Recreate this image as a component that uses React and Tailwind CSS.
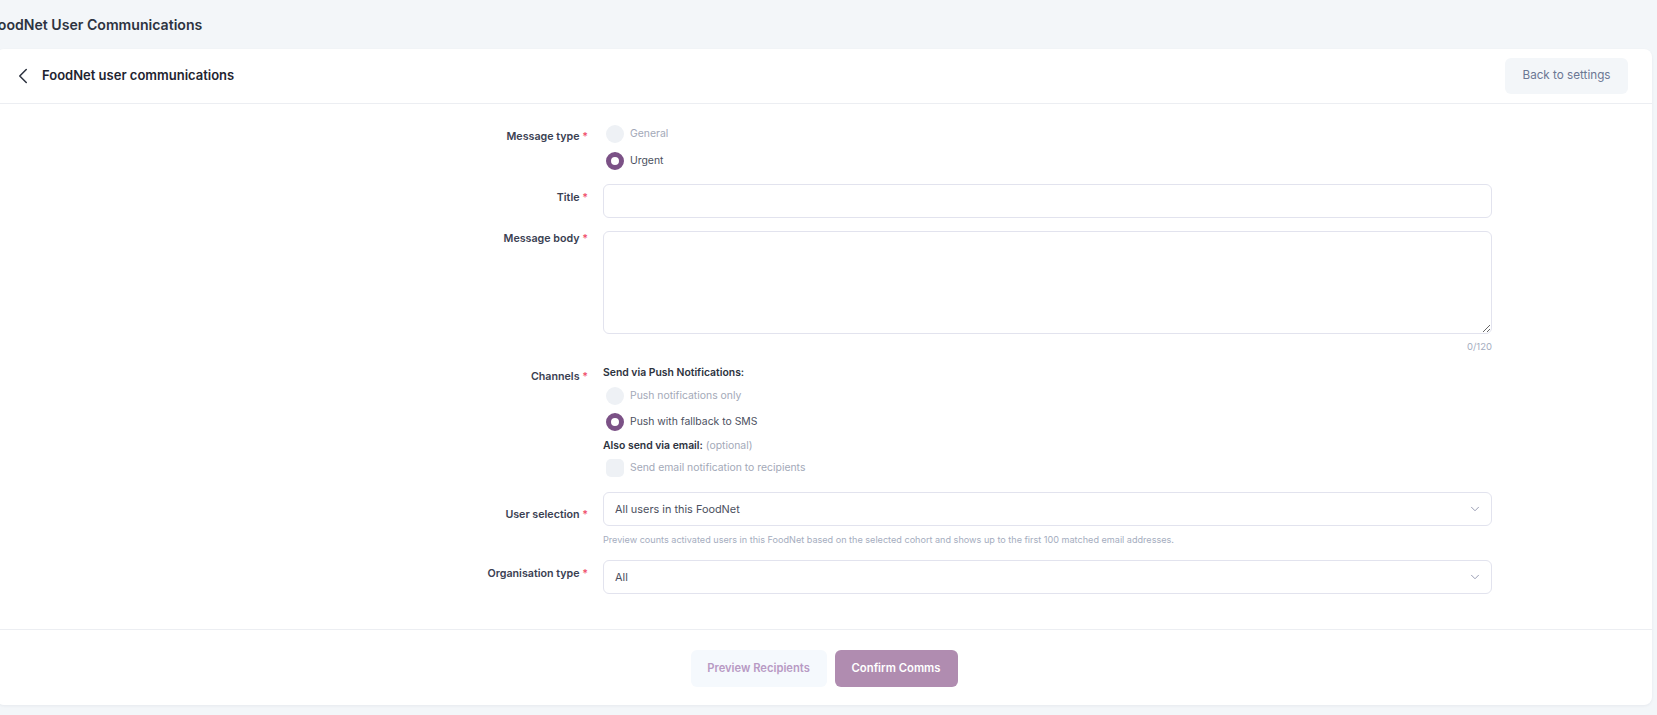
import React from "react";
import { ChevronLeft, ChevronDown } from "lucide-react";

const Label = ({ children, pt = "pt-0" }) => (
  <div className={`w-[200px] shrink-0 text-right text-[10.7px] leading-4 font-semibold text-[#3a4052] ${pt}`}>
    {children} <span className="text-[#f0506e]">*</span>
  </div>
);

const Radio = ({ checked, label }) => (
  <div className="flex items-center gap-[6px] h-[18px] pl-[3px]">
    {checked ? (
      <span className="w-[18px] h-[18px] rounded-full border-[5px] border-[#7b5186] bg-white" />
    ) : (
      <span className="w-[18px] h-[18px] rounded-full bg-[#eef1f5]" />
    )}
    <span className={`text-[10.4px] ${checked ? "text-[#4b5060]" : "text-[#a3a9b8]"}`}>{label}</span>
  </div>
);

const Select = ({ value }) => (
  <div className="h-[34px] w-[889px] rounded-md border border-[#e2e3ee] bg-white flex items-center justify-between pl-[11px] pr-[9px]">
    <span className="text-[10.9px] text-[#4b5060]">{value}</span>
    <ChevronDown size={14} strokeWidth={1.5} className="text-[#8a8fa8]" />
  </div>
);

export default function App() {
  return (
    <div className="w-[1657px] h-[715px] overflow-hidden bg-[#f3f6f9] font-['Inter',sans-serif]">
      <div className="h-[49px] flex items-center">
        <h1 className="-ml-[10px] mt-[1px] text-[14.1px] font-semibold text-[#2d3340]">FoodNet User Communications</h1>
      </div>

      <div className="-ml-1 w-[1656px] h-[656px] bg-white rounded-lg shadow-[0_1px_3px_rgba(30,40,60,0.06)]">
        <div className="h-[55px] flex items-center justify-between px-6 border-b border-[#eceef2]">
          <div className="flex items-center gap-[6px]">
            <ChevronLeft size={26} strokeWidth={1.4} className="text-[#2d3340] -ml-[10px]" />
            <span className="text-[13px] font-semibold text-[#1f2430]">FoodNet user communications</span>
          </div>
          <button className="h-[36px] w-[123px] rounded-md bg-[#f3f6f9] text-[11.7px] text-[#6b7794]">
            Back to settings
          </button>
        </div>

        <div className="pl-[392px] pt-[21px] pb-[35px] border-b border-[#eceef2] flex flex-col">
          <div className="flex gap-[15px]">
            <Label pt="pt-[4px]">Message type</Label>
            <div className="flex flex-col gap-[9px]">
              <Radio label="General" />
              <Radio checked label="Urgent" />
            </div>
          </div>

          <div className="flex gap-[15px] mt-[14px]">
            <Label pt="pt-[6px]">Title</Label>
            <div className="h-[34px] w-[889px] rounded-md border border-[#e2e3ee]" />
          </div>

          <div className="flex gap-[15px] mt-[13px]">
            <Label pt="pt-0">Message body</Label>
            <div className="w-[889px] flex flex-col">
              <textarea className="h-[103px] w-full rounded-md border border-[#e2e3ee] outline-none" />
              <div className="mt-[6px] text-right text-[9.5px] leading-[14px] text-[#a5adc0]">0/120</div>
            </div>
          </div>

          <div className="flex gap-[15px] mt-[11px]">
            <Label pt="pt-[4px]">Channels</Label>
            <div className="flex flex-col">
              <div className="text-[10.4px] leading-4 font-semibold text-[#2d3340]">Send via Push Notifications:</div>
              <div className="mt-[6px] flex flex-col gap-[8px]">
                <Radio label="Push notifications only" />
                <Radio checked label="Push with fallback to SMS" />
              </div>
              <div className="mt-[7px] text-[10.4px] leading-4 text-[#2d3340]">
                <span className="font-semibold">Also send via email:</span>{" "}
                <span className="text-[#a3a9b8]">(optional)</span>
              </div>
              <div className="mt-[5px] flex items-center gap-[6px] h-[18px] pl-[3px]">
                <span className="w-[18px] h-[18px] rounded-[5px] bg-[#eef1f5]" />
                <span className="text-[10.4px] text-[#a3a9b8]">Send email notification to recipients</span>
              </div>
            </div>
          </div>

          <div className="flex gap-[15px] mt-[15px]">
            <Label pt="pt-[15px]">User selection</Label>
            <div className="flex flex-col">
              <Select value="All users in this FoodNet" />
              <div className="mt-[7px] text-[9.1px] leading-[14px] text-[#a5adc0]">
                Preview counts activated users in this FoodNet based on the selected cohort and shows up to the first 100 matched email addresses.
              </div>
            </div>
          </div>

          <div className="flex gap-[15px] mt-[13px]">
            <Label pt="pt-[6px]">Organisation type</Label>
            <Select value="All" />
          </div>
        </div>

        <div className="flex justify-center gap-2 pt-[20px]">
          <button className="h-[37px] w-[136px] rounded-md bg-[#f5f9fd] text-[11.2px] font-semibold text-[#b89ac4]">
            Preview Recipients
          </button>
          <button className="h-[37px] w-[123px] rounded-md bg-[#b08cb0] text-[11.3px] font-semibold text-white">
            Confirm Comms
          </button>
        </div>
      </div>
    </div>
  );
}
